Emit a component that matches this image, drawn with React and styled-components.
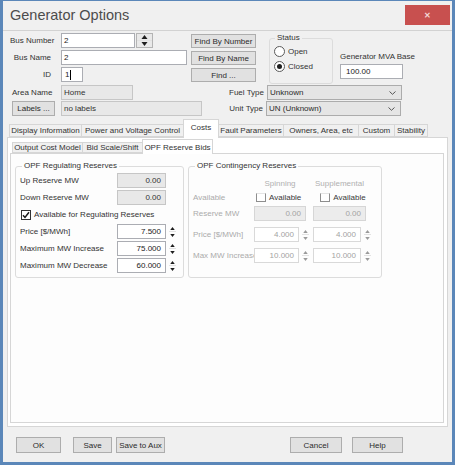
import React from "react";
import styled, { createGlobalStyle } from "styled-components";

const GlobalStyle = createGlobalStyle`
  html, body { margin: 0; padding: 0; background: #fff; }
  body {
    font-family: "Liberation Sans", Arial, sans-serif;
    font-size: 8px;
    color: #333;
  }
  * { box-sizing: border-box; }
`;

const Window = styled.div`
  width: 455px;
  height: 465px;
  border: 3px solid #5b87b9;
  border-top: 1px solid #5b87b9;
  background: #f0f0f0;
  display: flex;
  flex-direction: column;
`;
const TitleBar = styled.div`
  height: 29px;
  display: flex;
  justify-content: space-between;
  align-items: flex-start;
  padding-left: 7px;
`;
const Title = styled.div`
  font-size: 14.5px;
  color: #4c4c4c;
  line-height: 29px;
`;
const CloseBtn = styled.div`
  width: 45px;
  height: 20px;
  margin: 4px 2px 0 0;
  background: #c8504f;
  color: #f3d6d6;
  font-size: 8px;
  font-weight: bold;
  display: flex;
  align-items: center;
  justify-content: center;
`;
const Body = styled.div`
  flex: 1;
  border-top: 1px solid #d2d2d2;
  padding-top: 2px;
  display: flex;
  flex-direction: column;
`;
const Upper = styled.div`
  display: flex;
  height: 51px;
  padding-left: 5px;
`;
const LeftCol = styled.div`
  width: 179px;
  display: flex;
  flex-direction: column;
  gap: 2px;
`;
const Row = styled.div`
  display: flex;
  align-items: center;
  height: ${(p) => p.$h || 15}px;
  margin-top: ${(p) => p.$mt || 0}px;
  white-space: nowrap;
`;
const Label = styled.span`
  flex-shrink: 0;
  width: ${(p) => p.$w}px;
  text-align: ${(p) => (p.$right ? "right" : "left")};
  padding-left: ${(p) => p.$pl || 0}px;
  padding-right: ${(p) => p.$pr || 0}px;
  color: ${(p) => (p.$dis ? "#ababab" : "#333")};
  white-space: nowrap;
`;
const boxColors = {
  edit: ["#fff", "#abadb3", "#222"],
  ro: ["#e8e8e8", "#c6c6c6", "#333"],
  dis: ["#fff", "#d9d9d9", "#a3a3a3"],
  disro: ["#ececec", "#d6d6d6", "#a3a3a3"],
};
const Box = styled.div`
  flex-shrink: 0;
  width: ${(p) => p.$w}px;
  height: 15px;
  margin-left: ${(p) => p.$ml || 0}px;
  background: ${(p) => boxColors[p.$v || "edit"][0]};
  border: 1px solid ${(p) => boxColors[p.$v || "edit"][1]};
  color: ${(p) => boxColors[p.$v || "edit"][2]};
  display: flex;
  align-items: center;
  justify-content: ${(p) => (p.$num ? "flex-end" : "flex-start")};
  padding: 0 ${(p) => (p.$num ? 4 : p.$pl || 2)}px;
`;
const Caret = styled.span`
  width: 1px;
  height: 10px;
  background: #000;
  margin-left: 1px;
`;
const SpinBox = styled.div`
  flex-shrink: 0;
  width: ${(p) => (p.$big ? 17 : 9)}px;
  height: 15px;
  margin-left: ${(p) => (p.$big ? 1 : 2)}px;
  display: flex;
  flex-direction: column;
  border: 1px solid ${(p) => (p.$big ? "#b4b4b4" : "transparent")};
  background: ${(p) => (p.$big ? "#e9e9e9" : "transparent")};
`;
const SpinHalf = styled.div`
  flex: 1;
  display: flex;
  align-items: center;
  justify-content: center;
  & + & {
    border-top: 1px solid ${(p) => (p.$dis ? "#e2e2e2" : "#c9c9c9")};
  }
`;
const Btn = styled.button`
  flex-shrink: 0;
  width: ${(p) => p.$w}px;
  height: ${(p) => p.$h || 14}px;
  margin-left: ${(p) => p.$ml || 0}px;
  background: #e1e1e1;
  border: 1px solid #adadad;
  font: inherit;
  color: #2b2b2b;
  padding: 0;
`;
const ButtonCol = styled.div`
  width: 65px;
  margin-left: 4px;
  padding-top: 1px;
  display: flex;
  flex-direction: column;
  gap: 3px;
`;
const Group = styled.fieldset`
  margin: 0 0 0 ${(p) => p.$ml || 0}px;
  width: ${(p) => p.$w}px;
  height: ${(p) => (p.$h ? p.$h + "px" : "auto")};
  padding: 0 4px 3px 4px;
  border: 1px solid #dcdcdc;
  border-radius: 3px;
  min-width: 0;
`;
const Legend = styled.legend`
  margin-left: ${(p) => p.$ml ?? 2}px;
  padding: 0 2px;
  line-height: 10px;
  color: #333;
`;
const RadioRow = styled.div`
  display: flex;
  align-items: center;
  gap: 3px;
  height: 11px;
  margin-top: ${(p) => p.$mt}px;
`;
const Radio = styled.span`
  width: 11px;
  height: 11px;
  border-radius: 50%;
  border: 1px solid #5a5a5a;
  background: #fff;
  display: inline-flex;
  align-items: center;
  justify-content: center;
  &::after {
    content: "";
    width: 5px;
    height: 5px;
    border-radius: 50%;
    background: ${(p) => (p.$on ? "#1e1e1e" : "transparent")};
  }
`;
const MvaCol = styled.div`
  width: 63px;
  margin-left: 7px;
  display: flex;
  flex-direction: column;
`;
const MvaLabel = styled.div`
  margin-top: 19px;
  line-height: 10px;
  white-space: nowrap;
  margin-bottom: 2px;
`;
const Lower = styled.div`
  margin-top: 1px;
  display: flex;
  flex-direction: column;
  gap: 1px;
`;
const SelectBox = styled.div`
  flex-shrink: 0;
  width: 135px;
  height: 15px;
  background: #e5e5e5;
  border: 1px solid #acacac;
  display: flex;
  align-items: center;
  justify-content: space-between;
  padding: 0 5px 0 2px;
  color: #2b2b2b;
`;
const TabStrip = styled.div`
  display: flex;
  align-items: flex-end;
  height: ${(p) => p.$h}px;
  margin-top: ${(p) => p.$mt || 0}px;
  padding-left: ${(p) => p.$pl}px;
`;
const Tab = styled.div`
  flex-shrink: 0;
  width: ${(p) => p.$w}px;
  height: ${(p) => (p.$on ? p.$hOn : p.$hOff)}px;
  margin-right: -1px;
  margin-bottom: ${(p) => (p.$on ? -1 : 0)}px;
  position: relative;
  z-index: ${(p) => (p.$on ? 1 : 0)};
  border: 1px solid #d6d6d6;
  border-bottom: ${(p) => (p.$on ? "none" : "1px solid #d6d6d6")};
  background: ${(p) => (p.$on ? "#fff" : "#f0f0f0")};
  display: flex;
  align-items: ${(p) => (p.$on ? "flex-start" : "center")};
  padding-top: ${(p) => (p.$on ? 3 : 0)}px;
  justify-content: center;
  white-space: nowrap;
`;
const MainPanel = styled.div`
  height: 290px;
  margin: 0 4px;
  border: 1px solid #d6d6d6;
  background: #fff;
  padding-top: 1px;
`;
const SubPanel = styled.div`
  height: 270px;
  margin: 0 3px 0 2px;
  border: 1px solid #d6d6d6;
  background: #fdfdfd;
  padding: 7px 0 0 4px;
  display: flex;
  align-items: flex-start;
  gap: 4px;
`;
const GroupBody = styled.div`
  display: flex;
  flex-direction: column;
  gap: ${(p) => p.$gap || 0}px;
  padding-top: 2px;
`;
const CheckBox = styled.span`
  flex-shrink: 0;
  width: 10px;
  height: ${(p) => (p.$dis ? 9 : 10)}px;
  margin-left: ${(p) => p.$ml || 0}px;
  margin-right: 3px;
  border: 1px solid ${(p) => (p.$dis ? "#8e8e8e" : "#333")};
  border-top-color: ${(p) => (p.$dis ? "#e4e4e4" : "#333")};
  background: #fff;
  display: inline-flex;
  align-items: center;
  justify-content: center;
`;
const ColHead = styled.span`
  flex-shrink: 0;
  width: ${(p) => p.$w}px;
  margin-left: ${(p) => p.$ml || 0}px;
  text-align: center;
  color: #b0b0b0;
`;
const DisText = styled.span`
  color: #3a3a3a;
`;
const Footer = styled.div`
  display: flex;
  align-items: center;
  margin-top: 10px;
  padding-left: 13px;
`;

const Spinner = ({ big, dis }) => {
  const c = dis ? "#9a9a9a" : "#1e1e1e";
  const w = big ? 7 : 5;
  return (
    <SpinBox $big={big}>
      <SpinHalf $dis={dis}>
        <svg width={w} height={big ? 4 : 3} viewBox="0 0 6 4">
          <polygon points="0,4 3,0 6,4" fill={c} />
        </svg>
      </SpinHalf>
      <SpinHalf $dis={dis}>
        <svg width={w} height={big ? 4 : 3} viewBox="0 0 6 4">
          <polygon points="0,0 6,0 3,4" fill={c} />
        </svg>
      </SpinHalf>
    </SpinBox>
  );
};

const Chevron = () => (
  <svg width="7" height="4" viewBox="0 0 7 4">
    <polyline points="0.5,0.5 3.5,3.3 6.5,0.5" fill="none" stroke="#555" strokeWidth="1" />
  </svg>
);

const Tick = () => (
  <svg width="8" height="8" viewBox="0 0 8 8">
    <polyline points="1,4.2 3,6.4 7,1.2" fill="none" stroke="#1a1a1a" strokeWidth="1.5" />
  </svg>
);

const mainTabs = [
  ["Display Information", 73],
  ["Power and Voltage Control", 103],
  ["Costs", 36],
  ["Fault Parameters", 66],
  ["Owners, Area, etc", 76],
  ["Custom", 37],
  ["Stability", 34],
];
const subTabs = [
  ["Output Cost Model", 71],
  ["Bid Scale/Shift", 61],
  ["OPF Reserve Bids", 71],
];

const App = () => {
  return (
    <>
      <GlobalStyle />
      <Window>
        <TitleBar>
          <Title>Generator Options</Title>
          <CloseBtn>✕</CloseBtn>
        </TitleBar>
        <Body>
          <Upper>
            <LeftCol>
              <Row>
                <Label $w={53} $pl={2}>Bus Number</Label>
                <Box $w={74}>2</Box>
                <Spinner big />
              </Row>
              <Row>
                <Label $w={53} $right $pr={10}>Bus Name</Label>
                <Box $w={126}>2</Box>
              </Row>
              <Row>
                <Label $w={53} $right $pr={10}>ID</Label>
                <Box $w={22} $pl={3}>
                  1<Caret />
                </Box>
              </Row>
            </LeftCol>
            <ButtonCol>
              <Btn $w={65}>Find By Number</Btn>
              <Btn $w={65}>Find By Name</Btn>
              <Btn $w={65}>Find ...</Btn>
            </ButtonCol>
            <Group $ml={13} $w={64} $h={51}>
              <Legend $ml={1}>Status</Legend>
              <RadioRow $mt={3}>
                <Radio />
                Open
              </RadioRow>
              <RadioRow $mt={4}>
                <Radio $on />
                Closed
              </RadioRow>
            </Group>
            <MvaCol>
              <MvaLabel>Generator MVA Base</MvaLabel>
              <Box $w={63} $pl={5}>100.00</Box>
            </MvaCol>
          </Upper>
          <Lower>
            <Row>
              <Label $w={58} $pl={9}>Area Name</Label>
              <Box $w={72} $v="ro">Home</Box>
              <Label $w={134} $right $pr={3}>Fuel Type</Label>
              <SelectBox>
                Unknown
                <Chevron />
              </SelectBox>
            </Row>
            <Row>
              <Btn $w={43} $h={15} $ml={9}>Labels ...</Btn>
              <Box $w={141} $v="ro" $ml={6}>no labels</Box>
              <Label $w={64} $right $pr={3}>Unit Type</Label>
              <SelectBox>
                UN (Unknown)
                <Chevron />
              </SelectBox>
            </Row>
          </Lower>
          <TabStrip $h={18} $mt={3} $pl={6}>
            {mainTabs.map(([t, w]) => (
              <Tab key={t} $w={w} $on={t === "Costs"} $hOn={19} $hOff={13}>
                {t}
              </Tab>
            ))}
          </TabStrip>
          <MainPanel>
            <TabStrip $h={14} $pl={4}>
              {subTabs.map(([t, w]) => (
                <Tab key={t} $w={w} $on={t === "OPF Reserve Bids"} $hOn={15} $hOff={11}>
                  {t}
                </Tab>
              ))}
            </TabStrip>
            <SubPanel>
              <Group $w={169} $h={117}>
                <Legend>OPF Regulating Reserves</Legend>
                <GroupBody $gap={2}>
                  <Row>
                    <Label $w={97}>Up Reserve MW</Label>
                    <Box $w={49} $v="ro" $num>0.00</Box>
                  </Row>
                  <Row>
                    <Label $w={97}>Down Reserve MW</Label>
                    <Box $w={49} $v="ro" $num>0.00</Box>
                  </Row>
                  <Row>
                    <CheckBox $ml={1}>
                      <Tick />
                    </CheckBox>
                    Available for Regulating Reserves
                  </Row>
                  <Row>
                    <Label $w={97}>Price [$/MWh]</Label>
                    <Box $w={49} $num>7.500</Box>
                    <Spinner />
                  </Row>
                  <Row>
                    <Label $w={97}>Maximum MW Increase</Label>
                    <Box $w={49} $num>75.000</Box>
                    <Spinner />
                  </Row>
                  <Row>
                    <Label $w={97}>Maximum MW Decrease</Label>
                    <Box $w={49} $num>60.000</Box>
                    <Spinner />
                  </Row>
                </GroupBody>
              </Group>
              <Group $w={194} $h={117}>
                <Legend>OPF Contingency Reserves</Legend>
                <GroupBody>
                  <Row $h={12} $mt={4}>
                    <Label $w={61} />
                    <ColHead $w={52}>Spinning</ColHead>
                    <ColHead $w={53} $ml={7}>Supplemental</ColHead>
                  </Row>
                  <Row $h={13} $mt={2}>
                    <Label $w={61} $dis>Available</Label>
                    <CheckBox $dis $ml={2} />
                    <DisText>Available</DisText>
                    <CheckBox $dis $ml={19} />
                    <DisText>Available</DisText>
                  </Row>
                  <Row $mt={2}>
                    <Label $w={61} $dis>Reserve MW</Label>
                    <Box $w={52} $v="disro" $num>0.00</Box>
                    <Box $w={53} $v="disro" $num $ml={7}>0.00</Box>
                  </Row>
                  <Row $mt={6}>
                    <Label $w={61} $dis>Price [$/MWh]</Label>
                    <Box $w={45} $v="dis" $num>4.000</Box>
                    <Spinner dis />
                    <Box $w={48} $v="dis" $num $ml={3}>4.000</Box>
                    <Spinner dis />
                  </Row>
                  <Row $mt={6}>
                    <Label $w={61} $dis>Max MW Increase</Label>
                    <Box $w={45} $v="dis" $num>10.000</Box>
                    <Spinner dis />
                    <Box $w={48} $v="dis" $num $ml={3}>10.000</Box>
                    <Spinner dis />
                  </Row>
                </GroupBody>
              </Group>
            </SubPanel>
          </MainPanel>
          <Footer>
            <Btn $w={45} $h={16}>OK</Btn>
            <Btn $w={39} $h={16} $ml={12}>Save</Btn>
            <Btn $w={49} $h={16} $ml={4}>Save to Aux</Btn>
            <Btn $w={52} $h={16} $ml={125}>Cancel</Btn>
            <Btn $w={51} $h={16} $ml={10}>Help</Btn>
          </Footer>
        </Body>
      </Window>
    </>
  );
};

export default App;
